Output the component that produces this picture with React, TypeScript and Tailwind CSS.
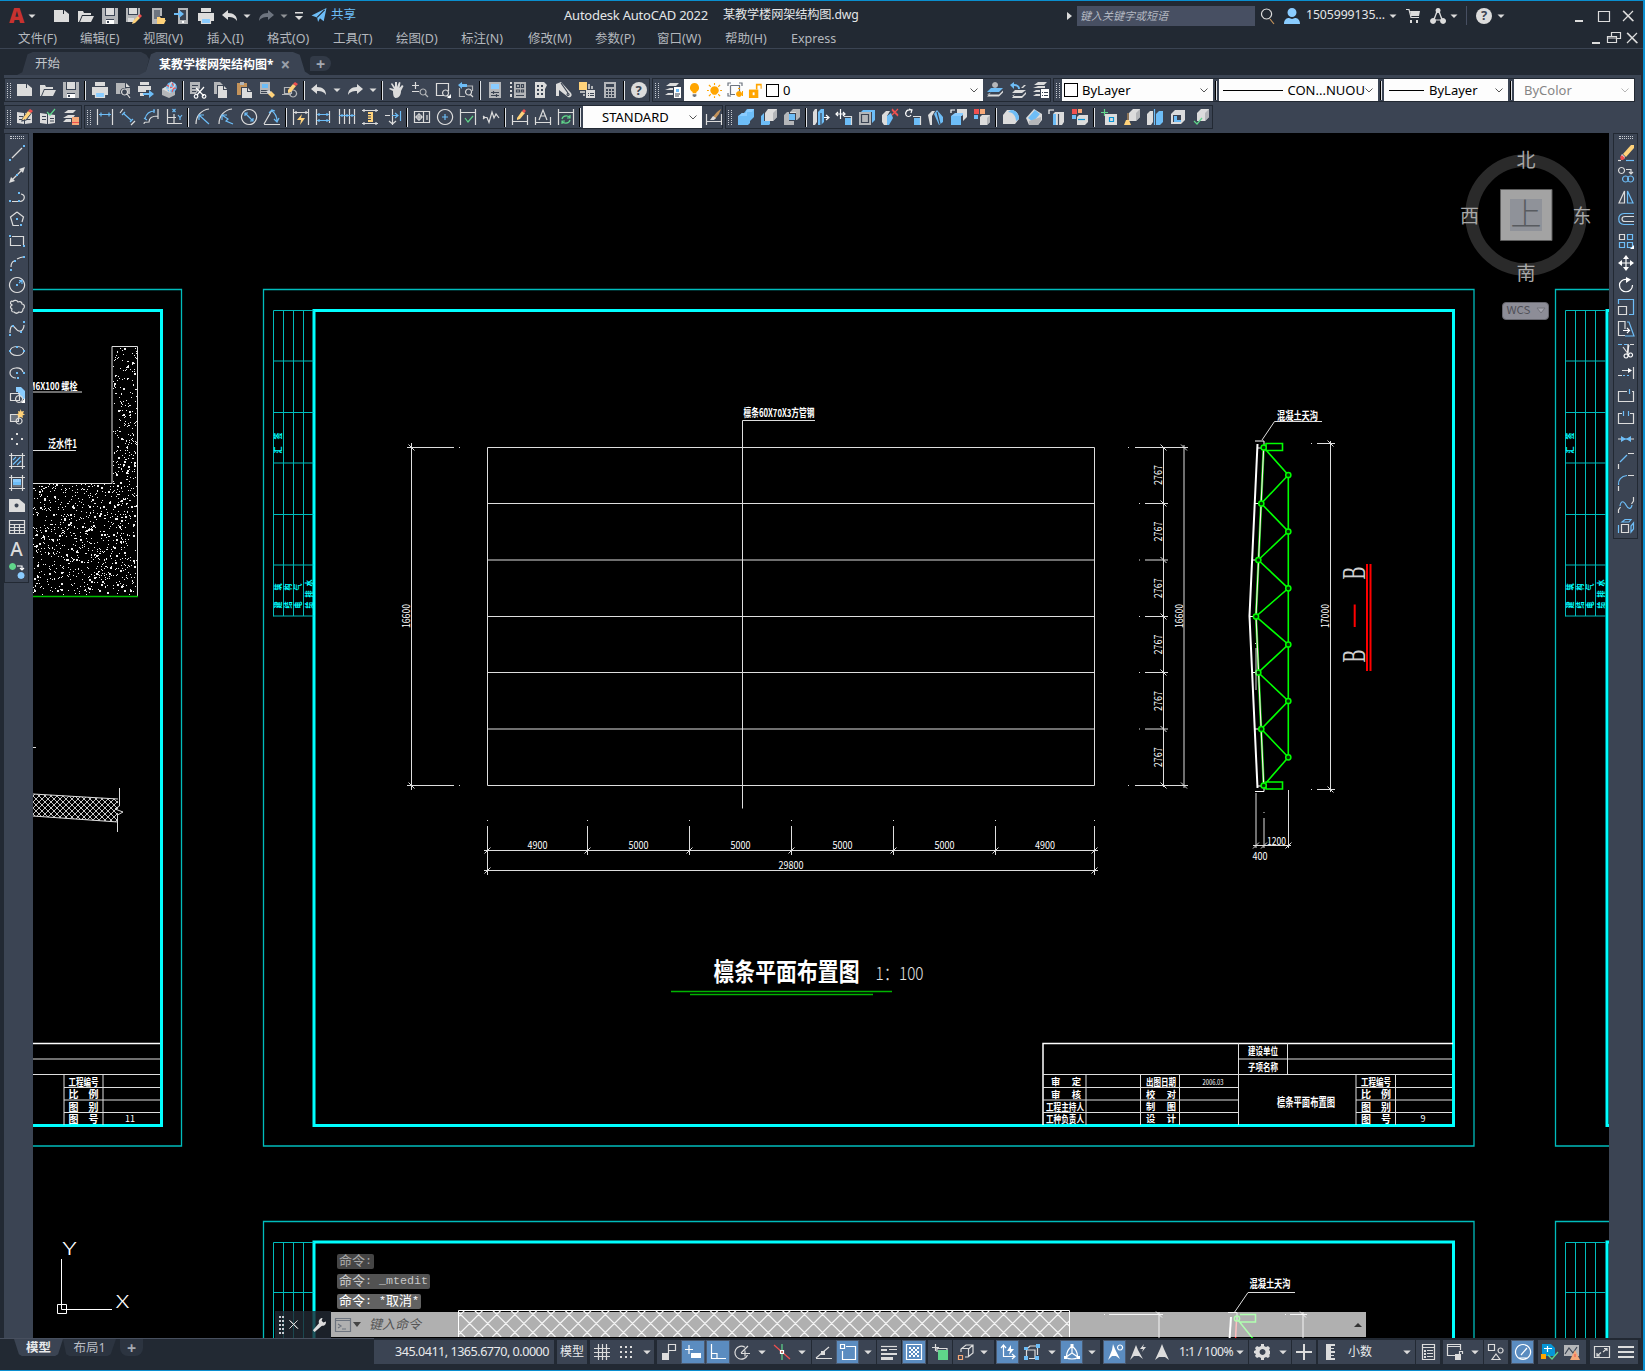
import type { ReactNode } from "react";
import clsx from "clsx";

// Icon layers: first letter f = fill, s = stroke, second letter picks the colour
const COLORS: Record<string, string> = {
  w: "#dcdcdc",
  W: "#ffffff",
  b: "#6dbdf7",
  l: "#8accff",
  y: "#ffd27a",
  o: "#ffa500",
  r: "#f0504f",
  g: "#5fd58a",
  d: "#3b4453",
  k: "#1d222b",
  m: "#b4b6b9",
  D: "#6d747f",
  s: "#0696d7",
  t: "#c4935a",
  n: "#f5a878",
};

const DOC = "M0 2h9v4h6v8H0z M10 2l5 4h-5z";
const OPEN = "M0 3h5l1 2h7v2H4L1 14H0z M4.5 8H16l-3 6H2z";
const CUBE = "M1 5l4-4h10v10l-4 4H1z";

const ICONS: Record<string, [string, string][]> = {
  doc: [["fw", DOC]],
  open: [["fw", OPEN]],
  save: [["fm", "M0 0h16v16H0z"], ["fd", "M3 0h10v8H3z M4 11h8v5H4z"], ["fw", "M4 0h8v7H4z"], ["fW", "M4 12h8v4H4z"], ["fd", "M5 13h2v2H5z"]],
  saveAs: [["fm", "M0 0h14v9l-5 5H0z"], ["fd", "M2 0h10v7H2z"], ["fw", "M3 0h8v6H3z M2 10h6v4H2z"], ["fy", "M7 13l5-5 2 2-5 5-3 1z"], ["fr", "M12 8l2-2 2 2-2 2z"]],
  webOpen: [["fm", "M2 0h10v8H8v8H2z"], ["fD", "M4 2h6v9H4z"], ["fy", "M7 9h3l1 1h4v2h1l-2 4H7z"]],
  webSave: [["fm", "M4 0h10v16H4z"], ["fd", "M6 2h6v10H6z"], ["fW", "M8 13h2v2H8z"], ["fb", "M0 5h5V2l5 4-5 4V7H0z"]],
  print: [["fw", "M3 0h10v4H3z M0 5h16v8h-3v-3H3v3H0z"], ["fl", "M4 11h8v4H4z"], ["sw", "M3.5 10.5h9v5h-9z"]],
  preview: [["fm", "M1 1h9v5h5v6H1z"], ["fw", "M11 1l4 4h-4z"], ["fd", "M9 6a4 4 0 1 0 .1 0z"], ["sw", "M9.500 7a3 3 0 1 0 .1 0z M12 12l3 4"]],
  publish: [["fw", "M2 0h9v3H2z M0 4h13v4H8v2H0z"], ["fw", "M2 11h4v3H2z"], ["fb", "M5 11h6V8l5 4-5 4v-3H5z"]],
  globe: [["fm", "M1 7l5-3 8 4v5l-6 3-7-3z"], ["fw", "M1 7l5-3 8 4-5 3z"], ["fb", "M10.500 0a5.200 5.200 0 1 0 .1 0z"], ["sr", "M6 3c3 3 6 4 9 3M10 0c3 3 3 7 1 10"], ["sw", "M11 0c-3 3-3 7-2 10M6 7c4 1 7-1 8-5"]],
  cut: [["fm", "M0 0h10v6L6 12H0z"], ["sd", "M2 3.500h6M2 6.500h5M2 9.500h4"], ["sW", "M6 6l8 8M14 5l-7 8"], ["sW", "M6 12.500a1.800 1.800 0 1 0 .1 0z M14 12.500a1.800 1.800 0 1 0 .1 0z"]],
  copy: [["fm", "M1 0h6l3 3v9H1z"], ["fd", "M4 3h7l4 4v9H4z"], ["fw", "M5 4h5v4h4v8H5z M11 4l3 3h-3z"]],
  paste: [["ft", "M1 1h10v12H1z"], ["fm", "M4 0h4v3H4z"], ["fd", "M5 5h7l4 4v7H5z"], ["fw", "M6 6h5v4h5v6H6z M12 6l3 3h-3z"]],
  match: [["fm", "M1 0h10v12H1z"], ["fb", "M3 2h6v4H3z"], ["sd", "M2 8.500h8M2 10.500h6"], ["fy", "M9 12l3-3 4 4-3 3z"], ["fw", "M7 9l3-1 2 2-2 2z"]],
  blockEdit: [["sm", "M2.500 5.500h7v6h-7z M0 12.500h9"], ["sm", "M11 8a3.500 3.500 0 1 0 .1 0z"], ["fy", "M6 8l5-6 3 2-5 6-3 1z"], ["fr", "M11 2l2-2 3 2-2 2z"]],
  undo: [["fw", "M0 7l6-5v3c6 0 9 3 9 8-2-3-4-4-9-4v3z"]],
  redo: [["fw", "M16 7l-6-5v3c-6 0-9 3-9 8 2-3 4-4 9-4v3z"]],
  redoDim: [["fD", "M16 7l-6-5v3c-6 0-9 3-9 8 2-3 4-4 9-4v3z"]],
  dd: [["fw", "M3 6h10l-5 5z"]],
  ddSmall: [["fw", "M4.500 6.500h7L8 10z"]],
  custom: [["fw", "M4 4h8v1.500H4z M4 8h8l-4 4z"]],
  plane: [["fb", "M0 8L16 0l-3 14-4-3-2 4-1-5z"], ["sk", "M6 10l8-8"]],
  hand: [["fw", "M4 9L0 7l1-1 4 1L2 2l1-1 3 4V0h2v5l2-5 1.500.500L10.500 6 13 3l1.500 1L12 9c0 4-2 7-5 7-2 0-3-2-3-7z"]],
  zoomRt: [["sw", "M3.500 0v7M0 3.500h7M0 9.500h7"], ["sm", "M11 7a3 3 0 1 0 .1 0z M13 12l3 3"]],
  zoomWin: [["sw", "M9 13.500H1.500v-12h12V9"], ["sw", "M10.500 8a3 3 0 1 0 .1 0z M12 13l3 3"], ["fW", "M16 12v4h-4z"]],
  zoomPrev: [["sm", "M1.500 6v8.500H7M14.500 9V4H9"], ["fb", "M0 3l4-3v2h5v3H4v2z"], ["sw", "M10.500 7a3 3 0 1 0 .1 0z M12 12l3 3"]],
  props: [["fm", "M2 0h12v16H2z"], ["fl", "M4 2h8v5H4z"], ["sd", "M4 10.500h8M4 13.500h8M6.500 9v3M9.500 12v3"]],
  dcenter: [["fw", "M0 0h2v2H0z M0 4h2v2H0z M0 8h2v2H0z M0 12h2v3H0z"], ["fm", "M4 0h12v16H4z"], ["sd", "M6.500 2.500h3v3h-3z M11.500 2.500h2v3h-2z M6.500 8h3v2h-3z M11.500 8h2v2h-2z M6 13.500h8"]],
  palettes: [["fw", "M2 0h9l3 3-2 4v9H2z"], ["fd", "M4 3h2v2H4z M8 3h2v2H8z M4 7h2v2H4z M8 7h2v2H8z M4 11h2v2H4z M8 11h2v2H8z"]],
  sheets: [["fw", "M0 2l5-2 10 11c2 3-1 5-3 4L3 8v6H0z"], ["sd", "M5 1l7 10M12 11.500a1 1 0 1 0 .1 0z"]],
  markup: [["fy", "M0 0h8v8H0z"], ["fm", "M9 2h2v5H9z M12 4h2v3h-2z M1 9h5v2H1z M4 12h2v2H4z"], ["fw", "M7 8h9v8H7z"], ["sd", "M9 11.500h1M11 11.500h4M9 13.500h1M11 13.500h4"]],
  calc: [["fm", "M2 0h12v16H2z"], ["fd", "M4 2h8v3H4z M4 7h2v2H4z M7 7h2v2H7z M10 7h2v2h-2z M4 10h2v2H4z M7 10h2v2H7z M10 10h2v2h-2z M4 13h2v2H4z M7 13h2v2H7z M10 13h2v2h-2z"]],
  layers: [["fw", "M5 1h9l-3 3H1z M5 6h6v2H0z M3 11h5v2H0z"], ["fd", "M8 4h8v12H8z"], ["fW", "M9 5h7v11H9z"], ["fb", "M11 7h3v3h-3z"], ["sd", "M10 12h5M10 14h4"]],
  layerIso: [["fm", "M8 0a3 3 0 1 0 .1 0z"], ["fb", "M4 6h12l-4 4H0z"], ["fw", "M4 10.500l-4 2h12l4-4v2l-4 4H0z"]],
  layerPrev: [["fb", "M0 3l4-3v2c4 0 6 2 6 5H8c0-2-1-3-4-3v3z"], ["fw", "M5 8h11l-4 3H2z M14 3h2l-3 3h-2z M5 12l-3 2h10l4-4v2l-4 4H2z"]],
  layerState: [["fw", "M5 0h9l-3 3H1z M5 4h7v2H0z M3 8h4v2H0z M3 12h4v2H0z"], ["fW", "M8 7h8v9H8z"], ["sd", "M9 10.500h1M11 10.500h4M9 13.500h1M11 13.500h4"]],
  bookEdit: [["fw", "M0 3l7 1v11l-7-1z M8 4l7-1v11l-7 1z"], ["sd", "M2 7.500h4M2 10.500h4M9.500 10.500h4"], ["sd", "M6 9l6-8 3 2-6 8-4 1z"], ["fy", "M6 9l5-7 3 2-5 6-4 1z"], ["fr", "M11 2l2-2 3 2-2 2z"]],
  bookOk: [["fw", "M0 4l7 1v10l-7-1z M8 5l7 1v8l-7 1z"], ["sd", "M2 7.500h4M2 10.500h4M10 9.500h4M10 12h4"], ["sg", "M7 3l3 3 5-6"]],
  layerBook: [["fw", "M5 1h8l-3 3H1z M5 6h7l-2 3H0z M3 10h5v3H0z"], ["fn", "M9 8h7v8H9z"], ["fr", "M9 13h7v1H9z"]],
  dLinear: [["sw", "M.5 0v16M15.500 0v16"], ["sb", "M2 5.500h12M4 3.500v4M12 3.500v4"]],
  dAligned: [["sw", "M0 4l3-4M11 16l4-4"], ["sb", "M3 4l9 8M2 6l3-3M10 13l3-3"]],
  dArc: [["sb", "M2 10C3 5 6 2 12 2M1 9l3 2M11 0v4"], ["sw", "M1 15c0-2 1-2 5-2 0-4 3-6 9-6M15 0v10"]],
  dOrd: [["sw", "M1.500 0v14.500H16M8 5v10M1 8.500h9"], ["sb", "M6.500 0l3 3M9.500 0l-3 3M12 6l2 2.500L16 6M14 8v3"]],
  dRadius: [["sw", "M1 15C1 7 6 1 14 0"], ["sb", "M4 6l10 9M4 11V6h5"]],
  dJog: [["sw", "M1 15C1 7 6 1 14 0"], ["sb", "M4 6l6 4-2 2 7 3M4 11V6h5"]],
  dDia: [["sw", "M8 .500a7.500 7.500 0 1 0 .1 0z"], ["sb", "M4 4l8 8M4 7V4h3M12 9v3H9"]],
  dAngle: [["sw", "M0 15.500h16M0 15L8 1"], ["sb", "M7 1c4 3 6 7 6 11M5 4l3-3 3 1M10 10l3 3 2-4"]],
  dQuick: [["sw", "M.5 0v16M15.500 0v16M1 3.500h14M3 2v3M13 2v3"], ["fy", "M9 5L4 11h4l-1 5 5-7H8z"]],
  dBase: [["sw", "M.5 0v16M13.500 2v12"], ["sb", "M1 5.500h12M1 11.500h13M3 4v3M3 10v3M11 4v3M11 10v3"]],
  dCont: [["sw", "M.5 0v15M5.500 0v15M10.500 0v15M15.500 0v15"], ["sb", "M0 6.500h16M3 5v3M8 5v3M13 5v3"]],
  dSpace: [["sw", "M0 1.500h16M0 14.500h16M2 0v3M14 0v3M2 13v3M14 13v3"], ["fy", "M6 3h5v10H6z"], ["sd", "M6 5.500h3M6 8h3M6 10.500h3"]],
  dBreak: [["sw", "M0 6.500h5M7.500 0v16M4 12l3.500 3L11 12"], ["sb", "M7 6.500h6M10 4l3 2.500L10 9M15.500 2v10"]],
  tol: [["sw", "M.5 2.500h15v11H.5z M9.500 3v10"], ["sw", "M5 5.500a2.500 2.500 0 1 0 .1 0z M1 8h8M5 4v8M13 6v5"]],
  center: [["sw", "M8 .500a7.500 7.500 0 1 0 .1 0z"], ["sb", "M8 5v6M5 8h6"]],
  inspect: [["sw", "M.5 0v16M15.500 0v16M1 3.500h14"], ["sg", "M5 9l3 4 5-6"]],
  jogLine: [["sw", "M0 8.500h4l2 5L9 3l2 6 2-4 3 4M0 7l2 1.500L0 10"]],
  dEdit: [["sw", "M.5 6v10M15.500 6v10M1 12.500h14"], ["fy", "M5 9l5-7 3 2-5 6-3 1z"], ["fr", "M10 2l2-2 2 2-2 2z"]],
  dText: [["sw", "M.5 8v8M15.500 8v8M1 13.500h14M4 11l4-10 4 10M5.500 7h5"]],
  dUpdate: [["sw", "M.5 0v16M15.500 0v16M1 3.500h14"], ["sg", "M4 10c1-4 7-4 8-1M12 11c-1 4-7 4-8 1M12 6v3H9M4 15v-3h3"]],
  dStyle: [["sw", "M.5 5v11M15.500 5v11M1 12.500h14"], ["ft", "M6 9l5-6 4-3-2 5-4 5z"], ["fw", "M4 11l3-4 3 2-2 2z"]],
  union: [["fb", "M0 7l4-3h2l3-4h7v8l-4 4v2l-2 2H0z"], ["fl", "M4 4h4v-2l3-2h5l-2 3H9v4H1z"]],
  subtract: [["fb", "M0 7l3-3v8h6v3l-1 1H0z"], ["fw", "M4 4l3-4h9v8l-4 4H4z"], ["fm", "M12 4l4-4v8l-4 4z"]],
  intersect: [["fm", "M0 6l3-3h2v9h5v4H0z M6 3l3-3h7v8l-3 3h-1V3z"], ["fw", "M6 3h6v1H6z"], ["fb", "M5 5h6v6H5z"]],
  extrude: [["fw", "M0 3l2-3h2v13l-2 3H0z"], ["fb", "M5 3l3-3h3v13l-3 3H5z"], ["sd", "M8 4v12"], ["sW", "M11 8.500h5M13 6l3 2.500L13 11"]],
  moveF: [["sW", "M0 5h9M4.500 0v10M2 3l-2 2 2 2M7 3l2 2-2 2"], ["fb", "M9 9h6v7H9z"], ["sw", "M8 7.500h7.500V16"]],
  offsetF: [["fb", "M4 1h12v10l-3 3V3H2z"], ["fm", "M0 3h12v13H0z"], ["sd", "M2.500 5.500h7v8h-7z"]],
  deleteF: [["fw", "M0 6l4-4h4l-3 5v9H2l-2-3z"], ["fb", "M5 7l4-3 2 5-4 7H5z"], ["sr", "M10 0l6 6M16 0l-6 6M10 1l6 6"]],
  rotateF: [["sW", "M6 1C2 0 0 3 1 6c1 2 4 2 5 0M4 0l3 1-1 3"], ["fb", "M9 9h6v7H9z"], ["sw", "M8 7.500h7.500V16"]],
  taperF: [["fw", "M0 6l4-4h3l-3 5v9H2z"], ["fb", "M6 5l3-4 6 7v5l-4 3z"], ["sd", "M9 3l3 12"]],
  copyF: [["fb", "M0 7h10v9H0z"], ["fl", "M0 7l4-3h9l-2 3z"], ["fw", "M6 0h10v8l-4 4V4H6z"], ["sW", "M0 4V1h4"]],
  colorF: [["fr", "M0 0h5v5H0z"], ["fn", "M6 0h5v5H6z"], ["fb", "M0 6h4v4H0z"], ["fw", "M6 8l2-2h8v7l-3 3H6z"], ["fm", "M13 9l3-3v7l-3 3z"]],
  fillet: [["fw", "M0 6l4-5h4c5 0 8 4 8 9l-4 5H0z"], ["fb", "M5 3l3-2c5 0 8 4 8 9l-3 2c0-5-3-9-8-9z"]],
  chamfer: [["fw", "M0 9L8 0l8 5v6l-4 5H3z"], ["fb", "M2 9l7-8 5 4-7 8z"], ["fm", "M3 12l12-4v3l-3 5H3z"]],
  shell: [["sW", "M0 5V1h5"], ["fw", "M4 5l2-2h9v10l-2 3H4z"], ["fb", "M4 5h3v11H4z"], ["sd", "M9.500 5v11"]],
  colorE: [["fr", "M0 0h5v5H0z"], ["fn", "M6 0h4v4H6z"], ["fb", "M0 6h4v4H0z"], ["fw", "M5 8l2-2h9v7l-3 3H5z"], ["ss", "M6 10.500h7"]],
  imprint: [["sg", "M0 3.500h7M3.500 0v7"], ["fw", "M4 5h12v11H4z"], ["ss", "M8.500 8.500h4v4h-4z"]],
  clean: [["fw", "M5 4l4-4h7v8l-4 4H5z"], ["fm", "M12 4l4-4v8l-4 4z"], ["fy", "M0 16l2-5h3l2 5z"], ["st", "M4 4v7"]],
  separate: [["fw", "M0 5l3-3h3v11l-2 3H0z"], ["fb", "M9 5l3-3h4v11l-3 3H9z"], ["sb", "M7.500 0v16"]],
  shellBox: [["fw", CUBE], ["fd", "M3 6h8v7H3z"], ["fb", "M4 7h3v4h4v2H4z"]],
  check: [["fw", "M4 4l4-4h8v8l-4 4H4z"], ["fm", "M12 4l4-4v8l-4 4z"], ["sg", "M1 12l3 3 5-6"]],
  line: [["sw", "M3 13L13 3"], ["fb", "M0 14h2v2H0z M14 0h2v2h-2z"]],
  xline: [["sw", "M3 13L13 3"], ["fw", "M0 16l2-6 4 4z M16 0l-2 6-4-4z"], ["fb", "M7 7h2v2H7z"]],
  pline: [["sw", "M3 12.500h6M12 5c5 1 4 7-1 7.500"], ["fb", "M0 11h2v2H0z M9 3h2v2H9z M9 11h2v2H9z"]],
  polygon: [["sw", "M8 1l6.500 5-1.500 5M10 14.500H4L1.500 6 8 1"], ["fb", "M7 7h2v2H7z M11 13h2v2h-2z"]],
  rect: [["sw", "M3 3.500h11.500V12M12 12.500H1.500V5"], ["fb", "M0 2h2v2H0z M14 12h2v2h-2z"]],
  arc: [["sw", "M2 12c0-3 1-5 3-6M8 4c2-1 4-2 6-2"], ["fb", "M1 14h2v2H1z M5 5h2v2H5z M14 1h2v2h-2z"]],
  circle: [["sw", "M8 .500a7.500 7.500 0 1 0 .1 0z"], ["fb", "M7 7h2v2H7z"], ["sb", "M10 6l3-3M10 3.500h3V7"]],
  cloud: [["sw", "M3 10C1 9 1 7 3 6 0 4 2 1 4 2.500 5 1 8 1 9 3c2-1 4 0 4 2 3 0 3 4 1 5 0 3-2 4-4 3-2 2-4 1-5 0-2 0-3-1-2-3z"]],
  spline: [["sw", "M1 12c0-4 1-8 3-7 3 2 4 6 7 5 3 0 4-4 4-6"], ["fb", "M0 13h2v2H0z M3 4h2v2H3z M11 10h2v2h-2z M14 0h2v2h-2z"]],
  ellipse: [["sw", "M8 3.500c9 0 9 9 0 9s-9-9 0-9z"], ["fb", "M0 7h2v2H0z M7 3h2v2H7z M14 7h2v2h-2z"]],
  ellArc: [["sw", "M14 7C12 1 1 2 1 8c0 3 3 5 6 5"], ["fb", "M7 7h2v2H7z M14 7h2v2h-2z M8 12h2v2H8z"]],
  insert: [["fl", "M7 0h5l4 4v8h-2L9 7V5H7z"], ["sw", "M1.500 6.500h9v7h-9z"], ["sw", "M10 8.500a3.500 3.500 0 1 0 .1 0z"], ["fW", "M16 11v5h-4z"]],
  block: [["fD", "M1 5h8v7H1z"], ["sw", "M1.500 5.500h8v7h-8z M10 9a3 3 0 1 0 .1 0z"], ["fy", "M11.500 0l1 2.500L15 2l-1 2.500 2 1-2.500 1 .5 2.500-2.500-1-2 1v-2.500L7 5.500l2.500-1L9 2l2 .500z"]],
  point: [["fw", "M7 2h2v2H7z M2 7h2v2H2z M12 7h2v2h-2z M7 12h2v2H7z"]],
  hatch: [["sw", "M0 2.500h16M0 13.500h16M2.500 0v16M13.500 0v16"], ["sb", "M4 7l3-3M4 11.500L11.500 4M8 12l4-4"]],
  gradient: [["sw", "M0 2.500h16M0 13.500h16M2.500 0v16M13.500 0v16"], ["fl", "M4 4h8v3H4z"], ["fb", "M4 7h8v3H4z"], ["fD", "M4 10h8v2H4z"]],
  region: [["fw", "M0 2h10l6 5v8H0z"], ["fd", "M7.500 6.500a2 2 0 1 0 .1 0z"]],
  table: [["sw", "M.5 1.500h15v13H.5z M0 5.500h16M0 8.500h16M0 11.500h16M5.500 5v10M10.500 5v10"]],
  addSel: [["fg", "M3.500 0a3.500 3.500 0 1 0 .1 0z"], ["fl", "M12 9a3.500 3.500 0 1 0 .1 0z"], ["sW", "M8 3h5v4M11 5l2 2 2-2"]],
  erase: [["fy", "M5 9L13 0h3v3l-8 9z"], ["fW", "M4 9l3 3-1 2-3-3z"], ["fr", "M2 12l2-2 3 3-2 2H3z"], ["sw", "M0 15.500h3"], ["sb", "M8 15.500h8"]],
  copyObj: [["sw", "M3.500 .500a3 3 0 1 0 .1 0z M8 2.500h5V7M11 5l2 2 2-2"], ["sb", "M7.500 9a3 3 0 1 0 .1 0z M12.500 9a3 3 0 1 0 .1 0z"]],
  mirror: [["sw", "M6.500 2v12H1z"], ["sb", "M9.500 2v12H15z"]],
  offset: [["sb", "M16 2.500H6C-1 3-1 13 6 13.500h10"], ["sw", "M16 5.500H7c-4 0-4 5 0 5h9"]],
  array: [["sw", "M1.500 1.500h5v5h-5z"], ["sb", "M9.500 1.500h5v5h-5z M1.500 9.500h5v5h-5z M9.500 9.500h5v5h-5z"], ["fW", "M16 12v4h-4z"]],
  move: [["sW", "M8 2v12M2 8h12"], ["fW", "M8 0l3 4H5z M8 16l3-4H5z M0 8l4-3v6z M16 8l-4-3v6z"]],
  rotate: [["sW", "M14.500 8c0 9-13 9-13 0 0-3 3-6 7-5.500"], ["fW", "M8 0l5 2.500L8 6z"]],
  scale: [["sb", "M.5 5V.500h15v15H11"], ["sw", "M.5 7.500h8v8h-8z"]],
  stretch: [["sw", "M7 8V.500H.5v14H7"], ["sb", "M9 1h2l5 14H7"], ["sW", "M5 9.500h6M9 7l2.500 2.500L9 12"]],
  trim: [["sb", "M0 1.500h4M6 1.500h3"], ["sw", "M12 1.500h4M5 4l6 8M11 2l-2 9"], ["sW", "M8 11a2 2 0 1 0 .1 0z M12.500 10a2 2 0 1 0 .1 0z M10 1v9"]],
  extend: [["sw", "M15.500 2v12M4 5.500h7M0 10.500h4"], ["fW", "M10 3l4 2.500L10 8z"], ["sb", "M5 10.500h2M9 10.500h2"]],
  breakPt: [["sw", "M9 4.500H.5v10h15v-10H14"], ["sb", "M11.500 2v5"]],
  breakTwo: [["sw", "M4 4.500H.5v10h15v-10H12"], ["sb", "M5.500 2v5M10.500 2v5"]],
  join: [["sb", "M4 8h8"], ["sw", "M0 8h4M12 8h4"], ["fb", "M3 5l5 3-5 3z M13 5L8 8l5 3z"]],
  chamf: [["sw", "M.5 16v-5M10 .500h6"], ["sb", "M2 9l7-7"]],
  filletE: [["sw", "M.5 16v-5M10 .500h6"], ["sb", "M.5 10C0 5 3 1 9 .500"]],
  blend: [["sw", "M.5 16v-3l2-3M15.500 0v4l-2 3"], ["sb", "M2 9C3 3 6 4 8 8s5 5 6 0"]],
  explode: [["sw", "M3.500 5.500h7v8h-7z"], ["sb", "M.5 6v8M4 3l3-2.500h6L11 3zM13 13V7l2.500-3v6z"]],
  sGrid: [["sw", "M4.500 0v16M8.500 0v16M12.500 0v16M0 4.500h16M0 8.500h16M0 12.500h16"]],
  sSnap: [["fw", "M2 2h2v2H2z M7 2h2v2H7z M12 2h2v2h-2z M2 7h2v2H2z M7 7h2v2H7z M12 7h2v2h-2z M2 12h2v2H2z M7 12h2v2H7z M12 12h2v2h-2z"]],
  sInfer: [["fw", "M1 9h7v7H1z"], ["sw", "M7.500 10V.500h7v6H8"]],
  sDyn: [["sW", "M0 5.500h8M4 1v9"], ["fW", "M6 9h10v5H6z"]],
  sOrtho: [["sW", "M1.500 0v14.500H16M2 9.500h5V15"]],
  sPolar: [["sw", "M11 3.200A6.500 6.500 0 1 0 13.500 11M7 9.500h9M7 9l7-7M11 6.500v6"]],
  sIso: [["sg", "M8 0v16"], ["sr", "M0 1l16 14"], ["sW", "M6.500 6.500h3v3h-3z"]],
  sTrack: [["sw", "M0 14.500h16M0 14L13 3"], ["fw", "M5 7h4v4H5z"]],
  sOsnap: [["sW", "M6 2.500h9.500v13h-13V7M.5 .500h4v4h-4z"]],
  sLwt: [["sw", "M0 2.500h16"], ["fw", "M0 5h6v2H0z M8 5h8v1H8z M0 9h16v2H0z M0 13h12v3H0z"]],
  sTrans: [["sW", "M.5 .500h15v15H.5z"], ["fW", "M3 3h2v2H3z M7 3h2v2H7z M11 3h2v2h-2z M5 5h2v2H5z M9 5h2v2H9z M3 7h2v2H3z M7 7h2v2H7z M11 7h2v2h-2z M5 9h2v2H5z M9 9h2v2H9z M3 11h2v2H3z M7 11h2v2H7z M11 11h2v2h-2z"]],
  sSel: [["sw", "M0 3.500h7M3.500 0v7M5 8V4.500h10V8"], ["fg", "M6 6h10v10H6z"]],
  s3d: [["sw", "M3 8V5l5-4h7v8l-5 4H7M3 4.500h7.500V13M10.500 5L15 1"], ["sn", "M.5 11.500h4v4h-4z"]],
  sUcs: [["sW", "M3.500 2v10.500H14M1 4l2.500-3L6 4M12 10l3 2.500L12 15"], ["fW", "M11 1L7 7h3l-1 4 5-6h-3z"]],
  sFilter: [["sw", "M4 4l2-2h6M2.500 6v6M5 14.500h6M13.500 4v7M3 6h8v8"], ["fb", "M0 3h4v3H0z M12 0h4v4h-4z M0 12h4v4H0z M11 12h4v4h-4z"]],
  sGizmo: [["sW", "M8 1v8l-6.500 4.500M8 9l6.500 4.500M8 2.500C5 4 3 7 2.500 12M8 2.500c3 1.500 5 4.500 5.500 9.500M2 13.500c3 2 9 2 12 0"], ["fW", "M6.500 0h3v3h-3z M0 12h3v3H0z M13 12h3v3h-3z"]],
  sAnno: [["fW", "M6 0l2 5 5 10-4-3H5l-4 4 4-10z"], ["sW", "M13 1a2.500 2.500 0 1 0 .1 0z"]],
  sAnnoAuto: [["fw", "M6 1l2 5 5 9-4-3H4l-4 4 4-10z M14 0l-4 5h3l-1 3 4-5h-3z"]],
  sAnnoPlain: [["fw", "M8 0l2 5 5 11-4-3H5l-4 3 5-11z"]],
  sGear: [["fw", "M7 0h3v2l2 1 2-1 2 2-1 2 1 1v3l-1 1 1 1-2 2-2-1-2 1v2H7v-2l-2-1-2 1-2-2 1-2-2-1V7l2-1-1-2 2-2 2 1 2-1z"], ["fd", "M8.500 5a3 3 0 1 0 .1 0z"]],
  sPlus: [["fw", "M7 0h2v7h7v2H9v7H7V9H0V7h7z"]],
  sRuler: [["fw", "M4 0h9v2H9v2h3v1H9v2h4v2H9v2h3v1H9v2h4v2H4z"]],
  sProps: [["sw", "M2.500 .500h12v15h-12z M3 3.500h11"], ["fw", "M4 6h2v2H4z M7 6h6v1H7z M4 9h2v2H4z M7 9h6v1H7z M4 12h2v2H4z M7 12h6v1H7z"]],
  sLock: [["sw", "M8 11.500H.5v-11h13V6M1 2.500h12"], ["fw", "M8 10h6v6H8z"], ["sw", "M12.500 10V7.500h3V10"]],
  sIsol: [["sw", "M.5 .500h6v6h-6z M12.500 4a2.500 2.500 0 1 0 .1 0z M8 10l4 5.500H4z"]],
  sPerf: [["sW", "M8 .500a7.500 7.500 0 1 0 .1 0z M6 11l6-7M4 14h8"]],
  sCad: [["fs", "M1 0h9l4 4v8H1z"], ["sW", "M3 4.500h8M6.500 2v6"], ["fo", "M0 10h5v5H0z"], ["sg", "M7 11l4 4 6-7"]],
  sGraph: [["fm", "M0 1h15v11H0z"], ["sd", "M1 10l4-6 4 5 4-6"], ["fn", "M11 6l5 10H6z"], ["fr", "M10.500 10h1v3h-1z"]],
  sClean: [["sw", "M.5 2.500h15v11H.5z M9 8l4-3.500M10 4.500h3V7M7 8.500L3 12M3 9v3h3"]],
  sMenu: [["fw", "M0 2h16v2H0z M0 7h16v2H0z M0 12h16v2H0z"]],
  search: [["sw", "M6.500 1a5 5 0 1 0 .1 0z"], ["st", "M10 11l4 5"]],
  user: [["fl", "M8 0a4 4 0 0 1 0 9 4 4 0 0 1 0-9z M0 16c0-5 3-6 5-6l3 1 3-1c2 0 5 1 5 6z"]],
  cart: [["sw", "M0 1.500h3l2 8h8"], ["fw", "M4 3h10l-1 5H5z M4 12h2v3H4z M10 12h2v3h-2z"]],
  tri: [["sw", "M8 2L3 13M8 2l5 11M3 12h10M7 3L4 12M9 3l3 9"], ["fw", "M8 0a2.500 2.500 0 1 0 .1 0z M3 10a3 3 0 1 0 .1 0z M13 10a3 3 0 1 0 .1 0z"]],
  min: [["fw", "M4 12h8v2H4z"]],
  max: [["sw", "M2.500 3.500h11v10h-11z"]],
  close: [["sw", "M3 3l10 10M13 3L3 13M3.500 3l10 10"]],
  restore: [["sw", "M5.500 6V2.500h9v6H11M1.500 6.500h9v6h-9zM2 8h9"]],
  bulb: [["fo", "M8 0a5 5 0 0 1 2 9.500V11H6V9.500A5 5 0 0 1 8 0z"], ["fD", "M6 12h4v2H6z M7 14h2v1H7z"]],
  sun: [["fo", "M8 3.500a4.500 4.500 0 1 0 .1 0z"], ["so", "M8 0v2M8 14v2M0 8h2M14 8h2M2 2l2 2M12 12l2 2M2 14l2-2M12 4l2-2"]],
  vpFreeze: [["sD", "M1 4V1h3M12 1h3v3M1 11v3h3M3.500 3.500h9v6M8 12.500H3.500v-9"], ["fo", "M12 9a3 3 0 1 0 .1 0z M11 6h2v1h-2z M15 9h1v5h-1z"]],
  unlock: [["fo", "M1 7h10v9H1z"], ["so", "M9 7V1.500h5V6M9.500 7V2h4"], ["fW", "M5 10h2v3H5z"]],
  term: [["sD", "M.5 1.500h15v13H.5z M1 3.500h14M3 7l3 2-3 2M7 12h4"]],
  wrench: [["fw", "M1 14l7-8c-1-3 1-6 4-6L11 3l2 2 3-1c0 4-2 5-5 5l-8 7z"]],
};

function Icon({ n, className = "size-4" }: { n: string; className?: string }) {
  return (
    <svg viewBox="0 0 16 16" className={clsx("shrink-0 overflow-visible", className)}>
      {ICONS[n].map(([kind, d], i) => {
        const color = COLORS[kind[1]];
        return <path key={i} d={d} fill={kind[0] === "f" ? color : "none"} stroke={kind[0] === "s" ? color : "none"} strokeWidth={1.2} />;
      })}
    </svg>
  );
}

function HelpBall() {
  return <span className="flex size-4 items-center justify-center rounded-full bg-[#dcdcdc] text-[13px] leading-none font-bold text-[#3b4453]">?</span>;
}

function Grip() {
  return <span className="mx-[2px] h-[15px] w-[4px] shrink-0 border-x border-dotted border-[#c8ccd2]" />;
}

// "|" is a divider, "v" a small drop-down arrow
function Tools({ list }: { list: string }) {
  return (
    <>
      {list.split(" ").map((n, i) => {
        if (n === "|") return <span key={i} className="mx-[2px] h-[19px] w-[2px] shrink-0 border-l border-black bg-[#dfe2e6]" />;
        if (n === "v") return <span key={i} className="flex w-[13px] shrink-0 justify-center"><Icon n="ddSmall" /></span>;
        return <span key={i} className="flex w-[23px] shrink-0 justify-center">{n === "help" ? <HelpBall /> : <Icon n={n} />}</span>;
      })}
    </>
  );
}

function Bar({ className, children }: { className: string; children: ReactNode }) {
  return <div className={clsx("flex h-[24px] shrink-0 items-center border border-[#222933]", className)}>{children}</div>;
}

function Combo({ className, children, dim }: { className: string; children: ReactNode; dim?: boolean }) {
  return (
    <div className={clsx("flex h-[22px] shrink-0 items-center bg-[#fdfdfd] text-[13px] whitespace-nowrap", dim ? "text-[#858585]" : "text-black", className)}>
      {children}
      <svg viewBox="0 0 8 5" className="mr-[5px] ml-auto h-[5px] w-[8px] shrink-0">
        <path d="M.5 .5L4 4 7.500 .5" fill="none" stroke={dim ? "#b5b5b5" : "#555"} />
      </svg>
    </div>
  );
}

const MENUS: [string, string][] = [
  ["文件(F)", "w-[62px]"],
  ["编辑(E)", "w-[63px]"],
  ["视图(V)", "w-[64px]"],
  ["插入(I)", "w-[60px]"],
  ["格式(O)", "w-[66px]"],
  ["工具(T)", "w-[63px]"],
  ["绘图(D)", "w-[65px]"],
  ["标注(N)", "w-[67px]"],
  ["修改(M)", "w-[67px]"],
  ["参数(P)", "w-[62px]"],
  ["窗口(W)", "w-[68px]"],
  ["帮助(H)", "w-[66px]"],
  ["Express", "w-[60px]"],
];

function TitleBar() {
  return (
    <div className="flex h-[27px] shrink-0 items-center pt-[2px] text-[12.5px]">
      <span className="ml-[8px] w-[17px] text-center text-[21px] leading-none font-black text-[#c8322f]">A</span>
      <span className="flex w-[14px] justify-center"><Icon n="ddSmall" /></span>
      <div className="ml-[11px] flex">
        {["doc", "open", "save", "saveAs", "webOpen", "webSave", "print", "undo"].map((n) => (
          <span key={n} className="flex w-[24px] justify-center"><Icon n={n} /></span>
        ))}
        <span className="flex w-[10px] justify-center"><Icon n="ddSmall" /></span>
        <span className="ml-[2px] flex w-[24px] justify-center"><Icon n="redoDim" /></span>
        <span className="flex w-[12px] justify-center opacity-60"><Icon n="ddSmall" /></span>
        <span className="flex w-[17px] justify-center"><Icon n="custom" /></span>
        <span className="flex w-[24px] justify-center"><Icon n="plane" className="h-[15px] w-[16px]" /></span>
      </div>
      <span className="w-[233px] text-[#6dbdf7]">共享</span>
      <span className="w-[159px] text-[13px] tracking-[-0.23px] whitespace-nowrap text-[#e4e6e8]">Autodesk AutoCAD 2022</span>
      <span className="w-[344px] text-[12.2px] tracking-[-0.15px] whitespace-nowrap text-[#e4e6e8]">某教学楼网架结构图.dwg</span>
      <span className="h-0 w-[10px] border-y-[4px] border-l-[5px] border-y-transparent border-l-[#dcdcdc]" />
      <span className="flex h-[20px] w-[178px] items-center bg-[#474f62] pl-[3px] text-[11px] text-[#b3b8c1] italic">键入关键字或短语</span>
      <span className="ml-[5px]"><Icon n="search" /></span>
      <span className="ml-[8px]"><Icon n="user" /></span>
      <span className="ml-[6px] w-[79px] text-[12.3px] tracking-[-0.1px] whitespace-nowrap text-[#e4e6e8]">1505999135...</span>
      <Icon n="ddSmall" />
      <span className="ml-[5px]"><Icon n="cart" /></span>
      <span className="ml-[8px]"><Icon n="tri" /></span>
      <Icon n="ddSmall" />
      <span className="ml-[4px] h-[19px] w-px bg-[#474f62]" />
      <span className="ml-[9px]"><HelpBall /></span>
      <span className="ml-[1px]"><Icon n="ddSmall" /></span>
      <span className="ml-[62px]"><Icon n="min" /></span>
      <span className="ml-[9px]"><Icon n="max" /></span>
      <span className="ml-[8px]"><Icon n="close" /></span>
    </div>
  );
}

function Tabs() {
  return (
    <div className="flex h-[26px] shrink-0 items-end text-[12.5px]">
      <div className="ml-[17px] flex h-[23px] w-[132px] items-center bg-[#323a47] pt-[2px] pl-[18px] text-[#c3c6cb] [clip-path:polygon(0_100%,4%_88%,8%_10%,12%_0,94%_0,98%_12%,100%_30%,97%_100%)]">开始</div>
      <div className="ml-[-10px] flex h-[23px] w-[171px] items-center bg-[#3b4453] pt-[2px] pl-[20px] text-[12px] font-bold whitespace-nowrap text-white [clip-path:polygon(0_100%,4%_85%,7%_10%,10%_0,90%_0,94%_12%,97%_85%,100%_100%)]">
        某教学楼网架结构图*
        <span className="ml-[7px] text-[17px] leading-none font-bold text-[#9aa0aa]">×</span>
      </div>
      <div className="mb-[4px] flex h-[15px] w-[21px] items-center justify-center rounded-tl rounded-r-lg bg-[#323a47] text-[16px] font-bold text-[#a4a9b1]">+</div>
    </div>
  );
}

function Toolbars() {
  return (
    <div className="ml-[4px] h-[58px] w-[1637px] shrink-0 bg-[#3b4453] pt-[3px]">
      <div className="flex gap-[2px]">
        <Bar className="w-[646px]">
          <Grip />
          <Tools list="doc open save | print preview publish globe | cut copy paste match blockEdit | undo v redo v | hand zoomRt zoomWin zoomPrev | props dcenter palettes sheets markup calc | help" />
        </Bar>
        <Bar className="w-[399px]">
          <Grip />
          <Tools list="layers" />
          <Combo className="w-[299px] gap-[5px] pl-[3px]">
            <Icon n="bulb" className="size-[15px]" />
            <Icon n="sun" className="size-[15px]" />
            <Icon n="vpFreeze" />
            <Icon n="unlock" className="size-[15px]" />
            <span className="-ml-[2px] size-[13px] border border-black bg-white" />
            <span className="-ml-[1px]">0</span>
          </Combo>
          <Tools list="layerIso layerPrev layerState" />
        </Bar>
        <Bar className="w-[582px]">
          <Grip />
          <Combo className="w-[151px] gap-[4px] pl-[2px]">
            <span className="size-[14px] border border-black bg-white" />
            ByLayer
          </Combo>
          <Tools list="|" />
          <Combo className="w-[159px] pl-[4px]">
            <span className="mr-[5px] h-px w-[60px] bg-black" />
            CON...NUOU
          </Combo>
          <Tools list="|" />
          <Combo className="w-[124px] pl-[5px]">
            <span className="mr-[5px] h-px w-[35px] bg-black" />
            ByLayer
          </Combo>
          <Tools list="|" />
          <Combo className="w-[120px] pl-[10px]" dim>ByColor</Combo>
        </Bar>
      </div>
      <div className="mt-[3px] flex gap-[2px]">
        <Bar className="w-[78px]">
          <Grip />
          <Tools list="bookEdit bookOk layerBook" />
        </Bar>
        <Bar className="w-[639px]">
          <Grip />
          <Tools list="dLinear dAligned dArc dOrd | dRadius dJog dDia dAngle | dQuick dBase dCont dSpace dBreak | tol center inspect jogLine | dEdit dText dUpdate |" />
          <Combo className="w-[119px] pl-[19px]">STANDARD</Combo>
          <Tools list="dStyle" />
        </Bar>
        <Bar className="w-[488px]">
          <Grip />
          <Tools list="union subtract intersect | extrude moveF offsetF deleteF rotateF taperF copyF colorF | fillet chamfer shell colorE | imprint clean separate shellBox check" />
        </Bar>
      </div>
    </div>
  );
}

const DRAW_TOOLS = "line xline pline polygon rect arc circle cloud spline ellipse ellArc insert block point hatch gradient region table text addSel".split(" ");
const EDIT_TOOLS = "erase copyObj mirror offset array move rotate scale stretch trim extend breakPt breakTwo join chamf filletE blend explode".split(" ");

function SideTools({ list }: { list: string[] }) {
  return (
    <div className="flex w-[25px] flex-col items-center border border-[#222933]">
      <span className="mt-[2px] mb-[3px] h-[3px] w-[14px] border-y border-dotted border-[#c8ccd2]" />
      {list.map((n) => (
        <span key={n} className="flex h-[22px] items-center">
          {n === "text" ? <span className="text-[19px] leading-none font-medium text-[#dcdcdc]">A</span> : <Icon n={n} />}
        </span>
      ))}
    </div>
  );
}

const CYAN = "#00ffff";
const THIN = "#00bcbc";
const INK = "#dedede";

type LabelProps = { x: number; y: number; s?: number; w?: number; rot?: boolean; fill?: string; weight?: number; children: string };

function Label({ x, y, s = 10, w, rot, fill = "#fff", weight = 400, children }: LabelProps) {
  return (
    <text
      x={x}
      y={y + s * 0.36}
      fontSize={s}
      fill={fill}
      fontWeight={weight}
      textAnchor="middle"
      textLength={w}
      lengthAdjust="spacingAndGlyphs"
      transform={rot ? `rotate(-90 ${x} ${y})` : undefined}
    >
      {children}
    </text>
  );
}

function Stroke({ d, c = INK, w = 1 }: { d: string; c?: string; w?: number }) {
  return <path d={d} fill="none" stroke={c} strokeWidth={w} />;
}

// Concrete filling, the same grains at every render
function grains() {
  let seed = 7;
  const rnd = () => (seed = (seed * 16807) % 2147483647) / 2147483647;
  let d = "";
  for (let i = 0; i < 1080; i++) {
    const column = i < 230;
    const x = Math.floor(column ? 113 + rnd() * 24 : 33 + rnd() * 104);
    const y = Math.floor(column ? 348 + rnd() * 136 : 484 + rnd() * 111);
    const size = rnd() > 0.9 ? 2 : 1;
    d += `M${x} ${y}h${size}v${size}h-${size}z`;
  }
  return d;
}

const SIGNS: [string, number, number][] = [
  ["签", 5, 436],
  ["汇", 5, 450],
  ["筑", 5, 587],
  ["建", 5, 605],
  ["构", 15, 587],
  ["结", 15, 605],
  ["气", 25, 587],
  ["电", 25, 605],
  ["水", 36, 583],
  ["排", 36, 594],
  ["给", 36, 605],
];

function SignColumn({ x }: { x: number }) {
  return (
    <g>
      <Stroke c={THIN} d={`M${x} 616.5V310.500H${x + 40}M${x + 10} 310V616M${x + 20} 310V616M${x + 30} 310V616M${x} 361H${x + 40}M${x} 412.500H${x + 40}M${x} 463H${x + 40}M${x} 514.500H${x + 40}M${x} 565H${x + 40}M${x} 616H${x + 40}`} />
      {SIGNS.map(([t, dx, y]) => (
        <Label key={t} x={x + dx} y={y} s={8} w={7} rot fill={CYAN} weight={700}>{t}</Label>
      ))}
      <Stroke c={THIN} d={`M${x} 1340V1242.500H${x + 40}M${x + 10} 1242V1340M${x + 20} 1242V1340M${x + 30} 1242V1340M${x} 1292.500H${x + 40}`} />
    </g>
  );
}

const ROWS = [447.5, 503.5, 560, 616.5, 672.5, 729, 785.5];
const COLS = [487.5, 587.5, 689.5, 791.5, 893.5, 995.5, 1094.5];
const LEFT_NODES = [1263.7, 1261.3, 1258.3, 1256, 1258.3, 1261.3, 1263.7];
const RIGHT_Y = [475, 531.5, 588.3, 644.5, 701, 757.3];
const MINOR: [number, string][] = [
  [1082, "工程编号"],
  [1094.5, "比　例"],
  [1107, "图　别"],
  [1119, "图　号"],
];

function Drawing() {
  const tick = (x: number, y: number) => `M${x - 3} ${y - 3}l6 6`;
  const slash = (x: number, y: number) => `M${x - 3} ${y + 3}l6 -6`;
  const zigzag = LEFT_NODES.map((x, i) => `${x} ${ROWS[i]}${i < 6 ? ` L1288.300 ${RIGHT_Y[i]} L` : ""}`).join("");
  return (
    <svg viewBox="33 133 1576 1205" className="block h-[1205px] w-[1576px] bg-black" fontFamily="'Noto Sans CJK SC', sans-serif">
      {/* sheet frames */}
      <Stroke c={THIN} w={1.3} d="M33 289.500H181.500V1146H33M263.500 289.500H1474V1146H263.500zM1609 289.500H1555.500V1146H1609M263.500 1340V1221.500H1474V1340M1555.500 1340V1221.500H1609" />
      <Stroke c={CYAN} w={3} d="M33 310.500H161.500V1125.500H33M314 310.500H1453.500V1125.500H314zM1609 310.500H1607V1125.500H1609M314 1340V1242H1453.500V1340M1609 1242H1607V1340" />
      <SignColumn x={273.5} />
      <SignColumn x={1565.5} />

      {/* parapet detail */}
      <path d={grains()} fill="#f0f0f0" />
      <Stroke d="M33 483.500H112V346.500H137.500V596" />
      <Stroke c="#00c000" d="M33 596.500H138" w={1.4} />
      <Label x={53} y={386.5} s={10.5} w={49} weight={700}>M6X100 螺栓</Label>
      <Stroke d="M33 392H82M33 450.500H76M33 747.500H36" />
      <Label x={62.5} y={444} s={11} w={29} weight={700}>泛水件1</Label>
      <clipPath id="slab"><path d="M33 794L118 799V822L33 816z" /></clipPath>
      <g clipPath="url(#slab)">
        <Stroke w={0.9} d={Array.from({ length: 34 }, (_, i) => `M${i * 6 - 20} 785l40 40M${i * 6 - 20} 825l40 -40`).join("")} />
      </g>
      <Stroke d="M33 794L118 799M33 816L118 822M119.500 788V806L115 809L123 812L117.500 815V832" />

      {/* purlin plan */}
      <Stroke d={`M487.500 447.500H1094.500V785.500H487.500z${ROWS.slice(1, 6).map((y) => `M488 ${y}H1094`).join("")}M742.500 808.500V420.500H815`} />
      <Label x={779} y={413} s={11} w={71} weight={700}>檩条60X70X3方管钢</Label>
      <Stroke d={`M411.500 443V790M407 447.500H454M407 785.500H454M459 447.500h1M459 785.500h1${tick(411.5, 447.5)}${tick(411.5, 785.5)}`} />
      <Label x={406.5} y={616} s={10.5} w={24} rot>16600</Label>
      <Stroke d={COLS.map((x) => `M${x} 826V855M${x} 820v1${slash(x, 850.5)}`).join("") + "M484 850.500H1098M484 870.500H1098M487.500 850V875M1094.500 850V875" + slash(487.5, 870.5) + slash(1094.5, 870.5)} />
      {["4900", "5000", "5000", "5000", "5000", "4900"].map((t, i) => (
        <Label key={i} x={(COLS[i] + COLS[i + 1]) / 2} y={845.5} s={10.5} w={20}>{t}</Label>
      ))}
      <Label x={791} y={865.5} s={10.5} w={25}>29800</Label>
      <Stroke d={ROWS.map((y, i) => (i % 6 ? `M1145 ${y}H1168M1139 ${y}h1` : `M1135 ${y}H1188M1128 ${y}h1${tick(1184, y)}`) + tick(1163.5, y)).join("") + "M1163.500 447V787M1184 445V788"} />
      {RIGHT_Y.map((y) => (
        <Label key={y} x={1158.5} y={y} s={10.5} w={20} rot>2767</Label>
      ))}
      <Label x={1179} y={616} s={10.5} w={24} rot>16600</Label>
      <Label x={786.5} y={971.5} s={25} w={146} weight={700}>檩条平面布置图</Label>
      <Label x={899.5} y={974} s={18} w={48} weight={300} fill="#e4e4e4">1：100</Label>
      <Stroke c="#00b400" w={1.4} d="M671 991.500H892M690 994.500H873" />

      {/* truss section */}
      <Stroke c="#00ff00" w={1.6} d={`M${zigzag}M1288.300 475V757M1266 443.500H1282.500V450.500H1266zM1266 782H1282.500V789H1266z`} />
      <Stroke c="#00c800" w={2.4} d="M1263.700 447L1256 616L1263.700 785" />
      <Stroke c="#ffe8e8" w={1.2} d="M1263.700 447L1256 616L1263.700 785" />
      <Stroke c="#fff" w={2} d="M1257.500 444L1249.500 616L1257.500 788" />
      <Stroke c="#fff" d="M1255 441H1264V448H1257M1255 791.500H1264V786H1257M1254 503.500h6M1252 560h6M1249 616.500h6M1252 672.500h6M1254 729h6" />
      {ROWS.map((y, i) => (
        <circle key={y} cx={LEFT_NODES[i]} cy={y} r={2.6} fill="#030" stroke="#00ff00" strokeWidth={1.5} />
      ))}
      {RIGHT_Y.map((y) => (
        <circle key={y} cx={1288.3} cy={y} r={2.6} fill="#030" stroke="#00ff00" strokeWidth={1.5} />
      ))}
      <Stroke d="M1262 440L1274.500 421.500H1322" />
      <Label x={1297.5} y={416} s={11} w={41} weight={700}>混凝土天沟</Label>
      <Stroke d={`M1330.500 441V792M1317 443.500H1335M1317 789.500H1335M1311 443.500h1M1311 789.500h1${tick(1330.5, 443.5)}${tick(1330.5, 789.5)}`} />
      <Label x={1325} y={616} s={10.5} w={24} rot>17000</Label>
      <Stroke d={`M1256 793V848M1264 818V848M1264 812v1M1288.500 790V848M1253 845.500H1291${slash(1256, 845.5)}${slash(1264, 845.5)}${slash(1288.5, 845.5)}M1255.500 643v1M1256 648V690`} />
      <Label x={1276.5} y={841} s={10.5} w={19}>1200</Label>
      <Label x={1260} y={856} s={10.5} w={15}>400</Label>
      <g fontFamily="'Liberation Serif', serif">
        <Label x={1353.5} y={573} s={33} w={13} rot fill="#cfcfcf">B</Label>
        <Label x={1353.5} y={656} s={33} w={13} rot fill="#cfcfcf">B</Label>
      </g>
      <Stroke c="#ff0000" w={2} d="M1354.700 604.500V627M1367 564V671M1370.500 564V671" />

      {/* title block */}
      <Stroke c="#fff" w={1.5} d="M1453 1043.500H1043V1125M33 1043.500H160" />
      <Stroke d="M1238.500 1059H1452M1043 1074.500H1452M1043 1087.500H1238.500M1043 1100H1238.500M1043 1112.500H1238.500M1356 1087.500H1452M1356 1100H1452M1356 1112.500H1452M1086 1074V1125M1140.500 1074V1125M1179.500 1074V1125M1238.500 1043V1125M1287.500 1043V1074M1356 1074V1125M1395.500 1074V1125" />
      <Stroke d="M33 1059H160M33 1074.500H160M64 1087.500H160M64 1100H160M64 1112.500H160M64 1074V1125M103 1074V1125" />
      <Label x={1263} y={1051} s={10} w={30} weight={700}>建设单位</Label>
      <Label x={1263} y={1067.5} s={10} w={30} weight={700}>子项名称</Label>
      <Label x={1066} y={1082} s={9.5} w={30} weight={700}>审　 定</Label>
      <Label x={1066} y={1094.5} s={9.5} w={30} weight={700}>审　 核</Label>
      <Label x={1065} y={1107} s={10} w={38} weight={700}>工程主持人</Label>
      <Label x={1065} y={1119} s={10} w={38} weight={700}>工种负责人</Label>
      <Label x={1161} y={1082} s={10} w={30} weight={700}>出图日期</Label>
      <Label x={1161} y={1094.5} s={9.5} w={30} weight={700}>校　 对</Label>
      <Label x={1161} y={1107} s={9.5} w={30} weight={700}>制　 图</Label>
      <Label x={1161} y={1119} s={9.5} w={30} weight={700}>设　 计</Label>
      <Label x={1306} y={1102.5} s={12} w={58} weight={700}>檩条平面布置图</Label>
      {MINOR.map(([y, t]) => (
        <g key={t}>
          <Label x={1376} y={y} s={10} w={30} weight={700}>{t}</Label>
          <Label x={83.5} y={y} s={10} w={30} weight={700}>{t}</Label>
        </g>
      ))}
      <Label x={1213} y={1082} s={8} w={21}>2006.03</Label>
      <Label x={1423} y={1119} s={9}>9</Label>
      <Label x={130} y={1119} s={9}>11</Label>

      {/* top of the next sheet */}
      <Stroke d={`M1104 1314.500h1M1109 1314.500H1163M1159 1312V1340M1285 1314.500h1M1290 1314.500H1307M1303 1312V1340${tick(1159, 1314.5)}${tick(1303, 1314.5)}M1234 1313L1248 1292.500H1295M1228 1312.500H1237V1320`} />
      <Stroke c="#fff" w={2} d="M1231 1317L1229.500 1340" />
      <Stroke c="#ff3030" w={1.5} d="M1236.500 1320L1235.500 1340" />
      <Stroke c="#00ff00" w={1.5} d="M1240 1314.500H1255.500V1322H1240M1238 1320L1254 1340" />
      <circle cx={1237} cy={1318.5} r={2.6} fill="none" stroke="#00ff00" strokeWidth={1.5} />
      <Label x={1270} y={1284.5} s={11} w={41} weight={700}>混凝土天沟</Label>

      {/* ucs icon */}
      <Stroke c="#fff" d="M61.500 1259V1309.500H112M57.500 1304.500H66.500V1313.500H57.500z" />
      <Label x={69.5} y={1248.5} s={18} w={14} weight={300}>Y</Label>
      <Label x={122.5} y={1302} s={18} w={14} weight={300}>X</Label>

      {/* view cube */}
      <circle cx={1526} cy={215} r={54.5} fill="none" stroke="#2a2a2a" strokeWidth={12.5} />
      <path d="M1500.500 189.500h51.500v51h-51.500z" fill="#a3a3a3" stroke="#5c5c5c" />
      <path d="M1510 199h32v32h-32z" fill="#8f9299" />
      <Label x={1526} y={214} s={31} w={31} fill="#585b60" weight={300}>上</Label>
      <Label x={1526} y={160} s={19} fill="#a8a8a8">北</Label>
      <Label x={1469.5} y={216.5} s={19} fill="#a8a8a8">西</Label>
      <Label x={1582} y={216.5} s={19} fill="#a8a8a8">东</Label>
      <Label x={1526} y={273} s={19} fill="#a8a8a8">南</Label>
      <rect x={1502.5} y={302.5} width={46} height={17} rx={3.5} fill="#8d8d97" stroke="#66666e" />
      <Label x={1518.5} y={310.5} s={11} w={24} fill="#505058">WCS</Label>
      <path d="M1537 308h8l-4 5z" fill="#a4a4ae" stroke="#73737b" />
    </svg>
  );
}

function CommandLine() {
  return (
    <div className="absolute bottom-0 left-[242px] w-[1091px]">
      <div className="mb-[2px] ml-[62px] flex flex-col items-start gap-[5px] font-['Liberation_Mono','Noto_Sans_CJK_SC',monospace] text-[11.7px] leading-[15px] whitespace-pre">
        <span className="flex h-[15px] rounded-[2px] bg-[#454545] px-[2px] text-[#a8a8a8]"><span className="text-[13px]">命令</span>:</span>
        <span className="flex h-[15px] rounded-[2px] bg-[#525252] px-[2px] text-[#c8c8c8]"><span className="text-[13px]">命令</span>: _mtedit</span>
        <span className="flex h-[15px] rounded-[2px] bg-[#626262] px-[2px] text-white"><span className="text-[13px]">命令</span>: *<span className="text-[13px]">取消</span>*</span>
      </div>
      <div className="flex h-[27px] items-center">
        <div className="flex h-full w-[56px] items-center bg-[#222933]/80">
          <span className="ml-[4px] h-[18px] w-[5px] border-x-2 border-dotted border-[#c8ccd2]" />
          <span className="ml-[3px]"><Icon n="close" className="size-[13px]" /></span>
          <span className="ml-[12px]"><Icon n="wrench" className="size-[14px]" /></span>
        </div>
        <div className="relative flex h-[25px] w-[1035px] items-center bg-white/69">
          <span className="ml-[4px]"><Icon n="term" /></span>
          <span className="ml-[2px] h-0 w-0 border-x-[4px] border-t-[5px] border-x-transparent border-t-[#444]" />
          <span className="ml-[8px] text-[13px] text-[#555] italic">键入命令</span>
          <svg viewBox="0 0 612 27" className="absolute top-[-2px] left-[127px] h-[27px] w-[612px]">
            <path d={Array.from({ length: 36 }, (_, i) => `M${i * 18.1 - 20} 0l27 27M${i * 18.1 - 20} 27l27-27`).join("")} stroke="#f4f4f4" strokeWidth={1.2} />
            <path d="M.5 27V.500H611.500V27" fill="none" stroke="#fff" />
          </svg>
          <span className="mr-[4px] ml-auto h-0 w-0 border-x-[4px] border-b-[4px] border-x-transparent border-b-[#333]" />
        </div>
      </div>
    </div>
  );
}

// One cell of the status bar; "on" marks an active mode
function Cell({ n, w = "w-[24px]", on }: { n: string; w?: string; on?: boolean }) {
  return (
    <span className={clsx("flex h-[24px] shrink-0 items-center justify-center", w, on && "border border-[#4b5a70] bg-[#5b8cc0]")}>
      <Icon n={n} className={n === "dd" ? "size-[12px]" : "size-[16px]"} />
    </span>
  );
}

function Group({ className, children }: { className: string; children: ReactNode }) {
  return <div className={clsx("flex h-[24px] shrink-0 items-center bg-[#3b4453]", className)}>{children}</div>;
}

function StatusBar() {
  return (
    <div className="flex h-[32px] shrink-0 bg-[#222933] text-[12.5px] text-[#e8eaec]">
      <div className="flex w-[374px] items-start border-t border-[#474f5e]">
        <span className="ml-[14px] flex h-[17px] w-[49px] items-center justify-center bg-[#3b4453] pt-px font-bold [clip-path:polygon(0_0,100%_0,90%_90%,84%_100%,16%_100%,10%_90%)]">模型</span>
        <span className="flex h-[17px] w-[53px] items-center justify-center bg-[#2c3440] pt-px text-[#b9bdc4] [clip-path:polygon(0_0,100%_0,90%_90%,84%_100%,12%_100%,6%_90%)]">布局1</span>
        <span className="ml-[4px] flex h-[17px] w-[23px] items-center justify-center rounded-b-lg bg-[#2c3440] text-[16px] font-bold text-[#a4a9b1]">+</span>
      </div>
      <div className="flex pt-[2px]">
        <Group className="w-[180px] justify-end pr-[5px] text-[12.6px] tracking-[-0.5px] whitespace-nowrap">345.0411, 1365.6770, 0.0000</Group>
        <Group className="ml-[3px] w-[30px] justify-center text-[12px]">模型</Group>
        <Group className="ml-[3px] w-[64px]"><Cell n="sGrid" w="w-[23px]" /><Cell n="sSnap" w="w-[26px]" /><Cell n="dd" w="w-[15px]" /></Group>
        <Group className="ml-[3px] w-[154px]">
          <Cell n="sInfer" w="w-[24px]" /><Cell n="sDyn" w="w-[24px]" on /><span className="w-px" /><Cell n="sOrtho" w="w-[24px]" on />
          <Cell n="sPolar" w="w-[24px]" /><Cell n="dd" w="w-[16px]" /><Cell n="sIso" w="w-[24px]" /><Cell n="dd" w="w-[16px]" />
        </Group>
        <Group className="ml-px w-[64px]"><Cell n="sTrack" w="w-[24px]" /><Cell n="sOsnap" w="w-[23px]" on /><Cell n="dd" w="w-[17px]" /></Group>
        <Group className="ml-px w-[24px]"><Cell n="sLwt" /></Group>
        <Group className="ml-px w-[24px]"><Cell n="sTrans" on /></Group>
        <Group className="ml-[2px] w-[24px]"><Cell n="sSel" /></Group>
        <Group className="ml-px w-[41px]"><Cell n="s3d" w="w-[25px]" /><Cell n="dd" w="w-[12px]" /></Group>
        <Group className="ml-[2px] w-[104px]">
          <Cell n="sUcs" w="w-[23px]" on /><Cell n="sFilter" w="w-[25px]" /><Cell n="dd" w="w-[16px]" /><Cell n="sGizmo" w="w-[23px]" on /><Cell n="dd" w="w-[17px]" />
        </Group>
        <Group className="ml-[3px] w-[145px]">
          <Cell n="sAnno" w="w-[23px]" on /><Cell n="sAnnoAuto" /><Cell n="sAnnoPlain" w="w-[23px]" />
          <span className="ml-[6px] w-[54px] text-[12.2px] tracking-[-0.5px] whitespace-nowrap">1:1 / 100%</span>
          <Cell n="dd" w="w-[14px]" />
        </Group>
        <Group className="ml-px w-[42px]"><Cell n="sGear" w="w-[26px]" /><Cell n="dd" w="w-[16px]" /></Group>
        <Group className="ml-px w-[24px]"><Cell n="sPlus" /></Group>
        <Group className="ml-[2px] w-[97px]"><Cell n="sRuler" /><span className="ml-[6px] w-[51px] text-[12px]">小数</span><Cell n="dd" w="w-[16px]" /></Group>
        <Group className="ml-px w-[24px]"><Cell n="sProps" /></Group>
        <Group className="ml-[3px] w-[40px]"><Cell n="sLock" /><Cell n="dd" w="w-[16px]" /></Group>
        <Group className="ml-px w-[24px]"><Cell n="sIsol" /></Group>
        <Group className="ml-[3px] w-[23px]"><Cell n="sPerf" w="w-[23px]" on /></Group>
        <Group className="ml-[4px] w-[48px]"><Cell n="sCad" w="w-[22px]" /><Cell n="sGraph" /></Group>
        <Group className="ml-[4px] w-[48px]"><Cell n="sClean" /><Cell n="sMenu" /></Group>
      </div>
    </div>
  );
}

export default function App() {
  return (
    <div className="flex h-[1371px] w-[1645px] flex-col overflow-hidden border-t border-r-2 border-b border-[#0a8fd0] bg-[#222933] font-['Noto_Sans','Noto_Sans_CJK_SC',sans-serif] leading-none">
      <TitleBar />
      <div className="flex h-[21px] shrink-0 items-center border-b border-[#3b4453] pl-[18px] text-[12.5px] text-[#b4b8be]">
        {MENUS.map(([label, w]) => (
          <span key={label} className={clsx("shrink-0 pt-[3px] whitespace-nowrap", w)}>{label}</span>
        ))}
        <span className="ml-auto flex gap-[2px] pr-[3px]">
          <Icon n="min" />
          <Icon n="restore" />
          <Icon n="close" />
        </span>
      </div>
      <Tabs />
      <Toolbars />
      <div className="ml-[4px] flex h-[1205px] w-[1637px] shrink-0 items-start bg-[#3b4453]">
        <div className="w-[29px]"><SideTools list={DRAW_TOOLS} /></div>
        <div className="relative h-[1205px] w-[1576px]">
          <Drawing />
          <CommandLine />
        </div>
        <div className="ml-[4px]"><SideTools list={EDIT_TOOLS} /></div>
      </div>
      <StatusBar />
    </div>
  );
}
